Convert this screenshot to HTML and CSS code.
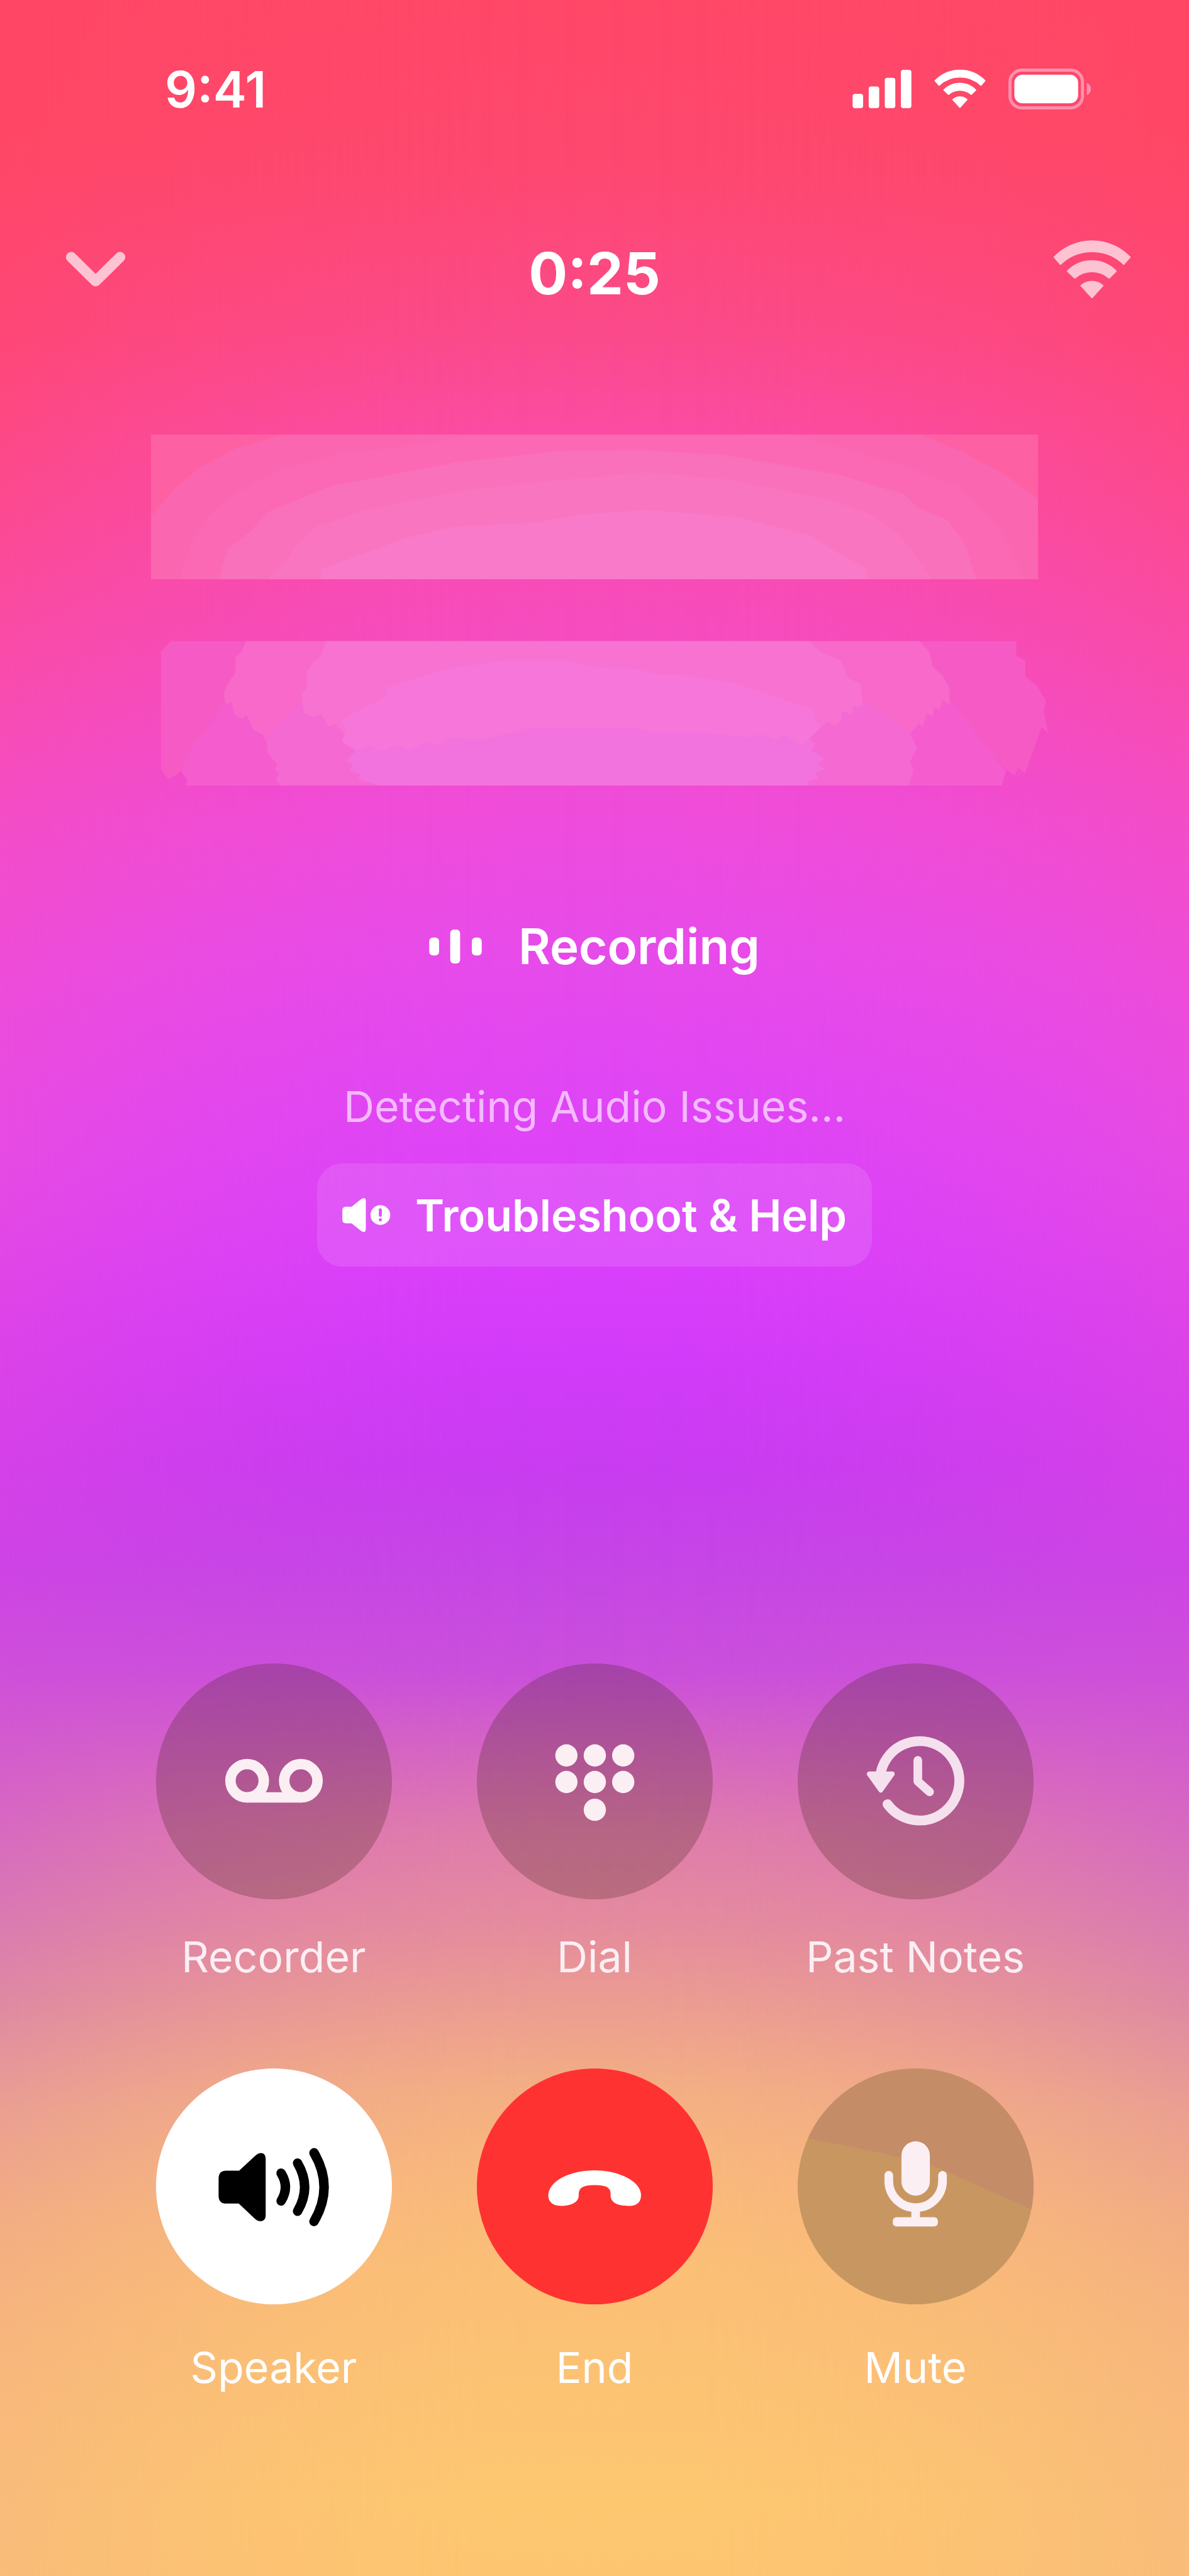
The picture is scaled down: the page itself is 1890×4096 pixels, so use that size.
FILE: index.html
```
<!DOCTYPE html>
<html lang="en">
    <head>
        <meta charset="UTF-8">
        <meta name="viewport" content="width=device-width, initial-scale=1.0">
        <title>Call recording</title>
        <link rel="stylesheet" href="styles.css">
    </head>
    <body>
        <main class="call">
            <header class="status">
                <span class="clock">9:41</span>
                <div class="status-icons">
                    <svg class="signal" viewBox="0 0 95 62">
                        <rect x="0" y="39" width="17" height="23" rx="4"/>
                        <rect x="26" y="27" width="17" height="35" rx="4"/>
                        <rect x="52" y="13" width="17" height="49" rx="4"/>
                        <rect x="78" y="0" width="17" height="62" rx="4"/>
                    </svg>
                    <svg class="wifi-small" viewBox="0 0 241 182">
                        <path d="M4 54A162 162 0 0 1 237 54L218 75A142 142 0 0 0 23 75Z"/>
                        <path d="M45 97A104 104 0 0 1 194 97L173 118A80 80 0 0 0 67 118Z"/>
                        <path d="M87 142A50 50 0 0 1 153 142L120 178Z"/>
                    </svg>
                    <svg class="battery" viewBox="0 0 133 66">
                        <rect class="battery-case" x="2.5" y="2.5" width="117" height="61" rx="19"/>
                        <rect x="9.5" y="10" width="103" height="46" rx="13"/>
                        <path class="battery-tip" d="M126.500 23Q133 26 133 33T126.500 43Z"/>
                    </svg>
                </div>
            </header>

            <div class="topbar">
                <button class="icon-btn" aria-label="Minimize">
                    <svg class="chevron" viewBox="0 0 97 58">
                        <path d="M9 9L48.500 48L88 9"/>
                    </svg>
                </button>
                <h1 class="timer">0:25</h1>
                <button class="icon-btn" aria-label="Connection">
                    <svg class="wifi-big" viewBox="0 0 241 182">
                        <path d="M4 54A162 162 0 0 1 237 54L218 75A142 142 0 0 0 23 75Z"/>
                        <path d="M45 97A104 104 0 0 1 194 97L173 118A80 80 0 0 0 67 118Z"/>
                        <path d="M87 142A50 50 0 0 1 153 142L120 178Z"/>
                    </svg>
                </button>
            </div>

            <!-- hidden contact name and number -->
            <section class="contact">
                <svg class="redacted" viewBox="45 103 1478 574" preserveAspectRatio="none" aria-hidden="true">
                    <rect x="45" y="103" width="1478" height="574" fill="#fd61a4"/>
                    <path fill="#fb66b0" d="M45 677V430L60 385L90 305L125 235L185 160L265 103H1325L1400 175L1468 262L1523 362V677Z"/>
                    <path fill="#fb69b5" d="M92 677L112 540L140 430L165 370L240 262L355 180L470 150L585 103H1115L1185 150L1310 235L1390 310L1425 395L1455 460L1478 560L1500 677Z"/>
                    <path fill="#fa71bb" d="M158 677L172 560L210 490L240 410L345 308L555 213L720 170L860 165L1000 185L1190 262L1300 340L1320 390L1370 440L1400 530L1420 677Z"/>
                    <path fill="#fa75c0" d="M240 677L272 600L285 545L320 470L400 405L555 330L700 290L870 254L1000 280L1180 365L1245 420L1292 500L1318 580L1345 677Z"/>
                    <path fill="#f87ac9" d="M328 677V638L470 513L550 468L685 453L760 420L870 402L1020 430L1145 503L1180 560L1235 632L1240 677Z"/>
                </svg>
                <svg class="redacted redacted-number" viewBox="64 923 1476 571" preserveAspectRatio="none" aria-hidden="true">
                    <path fill="#f65bc5" d="M80 924H1487V982L1502 1000V1065L1520 1095L1536 1160L1533 1205L1540 1285L1529 1264L1502 1445L1490 1425L1484 1455L1470 1430L1436 1350H120L97 1435L88 1455L76 1468L64 1430V965Z"/>
                    <path fill="#f55dce" d="M168 1160H1376L1400 1220L1438 1350L1470 1435L1463 1494H103L108 1475L97 1435L120 1325L150 1240Z"/>
                    <path fill="#f869ca" d="M205 924H1326L1342 965L1348 1025L1364 1060L1376 1108V1175L1364 1155L1360 1195L1350 1185L1348 1222L1338 1210L1332 1260L1325 1250L1310 1290L1318 1340H244L232 1290L218 1275L206 1217L198 1230L186 1215L182 1165L172 1175L168 1130L178 1080L188 1050V990L198 965Z"/>
                    <path fill="#f569d3" d="M297 1165H1240L1270 1220L1310 1285L1322 1345L1310 1400L1316 1435L1308 1494H262L256 1470L260 1445L253 1430L257 1410L241 1365L240 1305L265 1240Z"/>
                    <path fill="#f772d1" d="M338 924H1143L1160 965L1195 1000L1207 1070L1228 1092L1232 1182L1215 1183V1213L1197 1200V1235L1185 1258L1173 1242L1130 1335H388L372 1300L354 1250L343 1262L330 1213L318 1225L302 1210L297 1135L306 1110V1045L318 1005L330 985Z"/>
                    <path fill="#f776d9" d="M388 1357L365 1320L372 1280L362 1235L436 1145L440 1107L540 1032L640 1000H740L780 1028L850 1032L890 1055L935 1058L1020 1090L1150 1195L1153 1240L1163 1258L1142 1310V1350Z"/>
                    <path fill="#f373de" d="M427 1494L392 1468L397 1450L378 1435L383 1415L373 1395L388 1357L410 1333L432 1357L455 1333L478 1355L505 1322L528 1335L541 1305L595 1315L680 1264H848L880 1284H970L1040 1305L1060 1290L1087 1312L1100 1292L1132 1335L1142 1312L1153 1330L1145 1355L1168 1388L1156 1407L1168 1430L1153 1445L1157 1467L1138 1480L1144 1494Z"/>
                </svg>
            </section>

            <section class="state">
                <p class="recording">
                    <svg class="bars" viewBox="0 0 85 55">
                        <rect x="0" y="13" width="16" height="29" rx="6"/>
                        <rect x="34" y="0" width="16" height="55" rx="6"/>
                        <rect x="69" y="13" width="16" height="29" rx="6"/>
                    </svg>
                    Recording
                </p>
                <p class="detecting">Detecting Audio Issues...</p>
                <button class="help">
                    <svg class="help-icon" viewBox="0 0 77 55">
                        <path d="M6 14H15L30 2Q38 -3 38 5V50Q38 58 30 53L15 41H6Q0 41 0 35V20Q0 14 6 14Z"/>
                        <circle cx="61.500" cy="27.500" r="16"/>
                        <path class="help-mark" d="M61.500 19V28M61.500 35V35.500"/>
                    </svg>
                    Troubleshoot &amp; Help
                </button>
            </section>

            <section class="keypad">
                <div class="keys">
                    <button class="key">
                        <svg class="disc" viewBox="-191 -191 382 382">
                            <g class="line">
                                <circle cx="-43.500" cy="-1" r="27"/>
                                <circle cx="43.500" cy="-1" r="27"/>
                                <path d="M-43.500 26H43.500"/>
                            </g>
                        </svg>
                        Recorder
                    </button>
                    <button class="key">
                        <svg class="disc" viewBox="-191 -191 382 382">
                            <g class="solid">
                                <circle cx="-46" cy="-42" r="18"/>
                                <circle cx="0" cy="-42" r="18"/>
                                <circle cx="46" cy="-42" r="18"/>
                                <circle cx="-46" cy="1" r="18"/>
                                <circle cx="0" cy="1" r="18"/>
                                <circle cx="46" cy="1" r="18"/>
                                <circle cx="0" cy="46" r="18"/>
                            </g>
                        </svg>
                        Dial
                    </button>
                    <button class="key">
                        <svg class="disc" viewBox="-191 -191 382 382">
                            <g class="line history" transform="translate(-99 -97)">
                                <path d="M42.300 84A64.300 64.300 0 1 1 53.500 134"/>
                                <path class="hand" d="M102.500 63V97L121.500 114"/>
                                <path class="arrow" d="M24 85H61L42.500 111Z"/>
                            </g>
                        </svg>
                        Past Notes
                    </button>
                </div>

                <div class="keys keys-low">
                    <button class="key">
                        <svg class="disc disc-on" viewBox="-191 -191 382 382">
                            <g transform="translate(-113 -102) scale(0.333)">
                                <path d="M108 230H170L245 160C270 135 299 140 299 172V448C299 478 268 485 245 462L168 390H108Q70 390 70 352V268Q70 230 108 230Z"/>
                                <g class="wave">
                                    <path d="M374 242Q416 309 374 377"/>
                                    <path d="M454 193Q523 310 454 427"/>
                                    <path d="M534 143Q632 310 534 477"/>
                                </g>
                            </g>
                        </svg>
                        Speaker
                    </button>
                    <button class="key">
                        <svg class="disc disc-end" viewBox="-191 -191 382 382">
                            <path fill="#fff" transform="translate(-101 -102) scale(0.333)" d="M302 228C410 228 528 275 528 350C528 385 505 402 465 401C420 401 380 388 380 350C382 318 370 300 303 300C235 300 225 318 225 350C225 388 180 402 137 401C98 401 77 380 77 350C80 275 190 228 302 228Z"/>
                        </svg>
                        End
                    </button>
                    <button class="key">
                        <svg class="disc disc-mute" viewBox="-191 -191 382 382">
                            <path fill="#c48d68" d="M-191 -81L-60 -55L25 -35L187 37H191V-191H-191Z"/>
                            <g class="solid">
                                <rect x="-23" y="-73" width="46" height="88" rx="23"/>
                                <rect x="-7" y="34" width="14" height="20"/>
                                <rect x="-37" y="50" width="73" height="15" rx="6"/>
                            </g>
                            <path class="cradle" d="M-43.500 -18V-9A43.500 43.500 0 0 0 43.500 -9V-18"/>
                        </svg>
                        Mute
                    </button>
                </div>
            </section>
        </main>
    </body>
</html>
```
FILE: styles.css
```
* {
    box-sizing: border-box;
}
body {
    margin: 0;
    font-family: Inter, "Liberation Sans", sans-serif;
    color: #fff;
}
h1, p {
    margin: 0;
}
button {
    padding: 0;
    border: 0;
    background: none;
    color: inherit;
    font: inherit;
    cursor: pointer;
}
svg {
    display: block;
    flex: none;
    fill: #fff;
}

/* colours of the side edges; the ::before layer holds the colours of the middle */
.call {
    position: relative;
    isolation: isolate;
    min-height: 100vh;
    display: flex;
    flex-direction: column;
    background: linear-gradient(
        #ff4765 0%, #ff4765 5%, #fe4777 13%, #fc4a92 20%, #f94cac 26%,
        #f44dc8 32%, #ee4cd9 38%, #e64be4 45%, #de44e8 51%, #d541e8 57%,
        #ce44e5 61%, #cf50da 65%, #d765c5 70%, #da78b4 74%, #e08ba2 78%,
        #eba092 82%, #f3ad84 86%, #f7b57e 90%, #f9ba7b 94%, #fabd7a 100%);
}
.call::before {
    content: "";
    position: absolute;
    inset: 0;
    z-index: -1;
    background: linear-gradient(
        #ff4768 0%, #fe486e 6%, #fb4a8b 13%, #fb4ca5 17%, #f64cbd 24%,
        #ee4cdc 32%, #e64bea 37%, #df45f5 43%, #d93ffb 49%, #d13bf9 53%,
        #c83cf0 57%, #c546e5 61%, #ca50da 65%, #d566c1 68%, #df7cab 71%,
        #e58d9c 75%, #ec9e90 78%, #f3ae84 81%, #f8b77d 84%, #fbbf76 88%,
        #fcc373 93%, #fdc770 97%, #fdc570 100%);
    -webkit-mask-image: linear-gradient(to right, transparent 0%, rgba(0, 0, 0, .36) 10%, rgba(0, 0, 0, .64) 20%, rgba(0, 0, 0, .84) 30%, rgba(0, 0, 0, .96) 40%, #000 50%, rgba(0, 0, 0, .96) 60%, rgba(0, 0, 0, .84) 70%, rgba(0, 0, 0, .64) 80%, rgba(0, 0, 0, .36) 90%, transparent 100%);
    mask-image: linear-gradient(to right, transparent 0%, rgba(0, 0, 0, .36) 10%, rgba(0, 0, 0, .64) 20%, rgba(0, 0, 0, .84) 30%, rgba(0, 0, 0, .96) 40%, #000 50%, rgba(0, 0, 0, .96) 60%, rgba(0, 0, 0, .84) 70%, rgba(0, 0, 0, .64) 80%, rgba(0, 0, 0, .36) 90%, transparent 100%);
}

.status {
    height: 282px;
    padding: 0 156px 0 262px;
    display: flex;
    align-items: center;
    justify-content: space-between;
}
.clock {
    font-size: 80px;
    font-weight: 600;
}
.status-icons {
    display: flex;
    align-items: center;
    gap: 36px;
}
.signal {
    width: 94px;
    height: 61px;
}
.wifi-small {
    width: 82px;
    height: 62px;
}
.wifi-small path, .wifi-big path {
    stroke: #fff;
    stroke-width: 5;
    stroke-linejoin: round;
}
.battery {
    width: 131px;
    height: 65px;
}
.battery-case {
    fill: none;
    stroke: #ff90ae;
    stroke-width: 5;
}
.battery-tip {
    fill: #ff90ae;
}

.topbar {
    height: 304px;
    padding: 0 92px;
    display: grid;
    grid-template-columns: 1fr auto 1fr;
    align-items: center;
}
.icon-btn {
    padding: 0 12px 12px;
    justify-self: start;
}
.icon-btn:last-child {
    padding: 0 0 12px;
    justify-self: end;
}
.chevron {
    width: 96px;
    height: 57px;
    fill: none;
    stroke: #fdc3d2;
    stroke-width: 17;
    stroke-linecap: round;
    stroke-linejoin: round;
}
.timer {
    font-size: 92px;
    font-weight: 700;
}
.wifi-big {
    width: 124px;
    height: 94px;
}
.wifi-big path {
    fill: #fdc3d2;
    stroke: #fdc3d2;
}

.contact {
    padding: 105px 224px 0 240px;
    display: flex;
    flex-direction: column;
    gap: 98px;
}
.redacted {
    width: calc(100% - 16px);
    height: 230px;
}
.redacted-number {
    align-self: flex-end;
}

.state {
    margin-top: 208px;
    display: flex;
    flex-direction: column;
    align-items: center;
}
.recording {
    display: flex;
    align-items: center;
    gap: 58px;
    line-height: 96px;
    font-size: 78px;
    font-weight: 600;
}
.bars {
    width: 84px;
    height: 54px;
}
.detecting {
    margin-top: 164px;
    line-height: 84px;
    font-size: 68px;
    color: #f4baff;
}
.help {
    height: 164px;
    margin-top: 49px;
    padding: 0 40px;
    display: flex;
    align-items: center;
    gap: 40px;
    border-radius: 40px;
    background: rgba(255, 255, 255, .11);
    font-size: 70px;
    font-weight: 600;
}
.help-icon {
    width: 76px;
    height: 54px;
    overflow: visible;
}
.help-mark {
    stroke: #dd54f9;
    stroke-width: 5;
    stroke-linecap: round;
}

.keypad {
    margin-top: auto;
    padding: 80px 0 290px;
    display: flex;
    flex-direction: column;
    gap: 136px;
}
.keys {
    display: flex;
    justify-content: center;
    gap: 135px;
}
.key {
    width: 375px;
    display: flex;
    flex-direction: column;
    align-items: center;
    gap: 49px;
    line-height: 84px;
    font-size: 68px;
    color: #fbeff4;
    white-space: nowrap;
}
.keys-low .key {
    gap: 58px;
    color: #fff;
}
.disc {
    width: 375px;
    height: 375px;
    border-radius: 50%;
    background: rgba(60, 30, 20, .25);
}
.disc-on {
    background: #fff;
    fill: #000;
}
.disc-end {
    background: #ff3232;
}
.disc-mute {
    background: #c89761;
}
.solid {
    fill: #fbeff4;
}
.line {
    fill: none;
    stroke: #fbeff4;
    stroke-width: 17;
    stroke-linecap: round;
}
.history {
    stroke: #f5e1ee;
    stroke-width: 16;
}
.hand {
    stroke-width: 14;
    stroke-linejoin: round;
}
.arrow {
    fill: #f5e1ee;
    stroke-width: 8;
    stroke-linejoin: round;
}
.wave {
    fill: none;
    stroke: #000;
    stroke-width: 46;
    stroke-linecap: round;
}
.cradle {
    fill: none;
    stroke: #fbeff4;
    stroke-width: 14;
    stroke-linecap: round;
}
```
